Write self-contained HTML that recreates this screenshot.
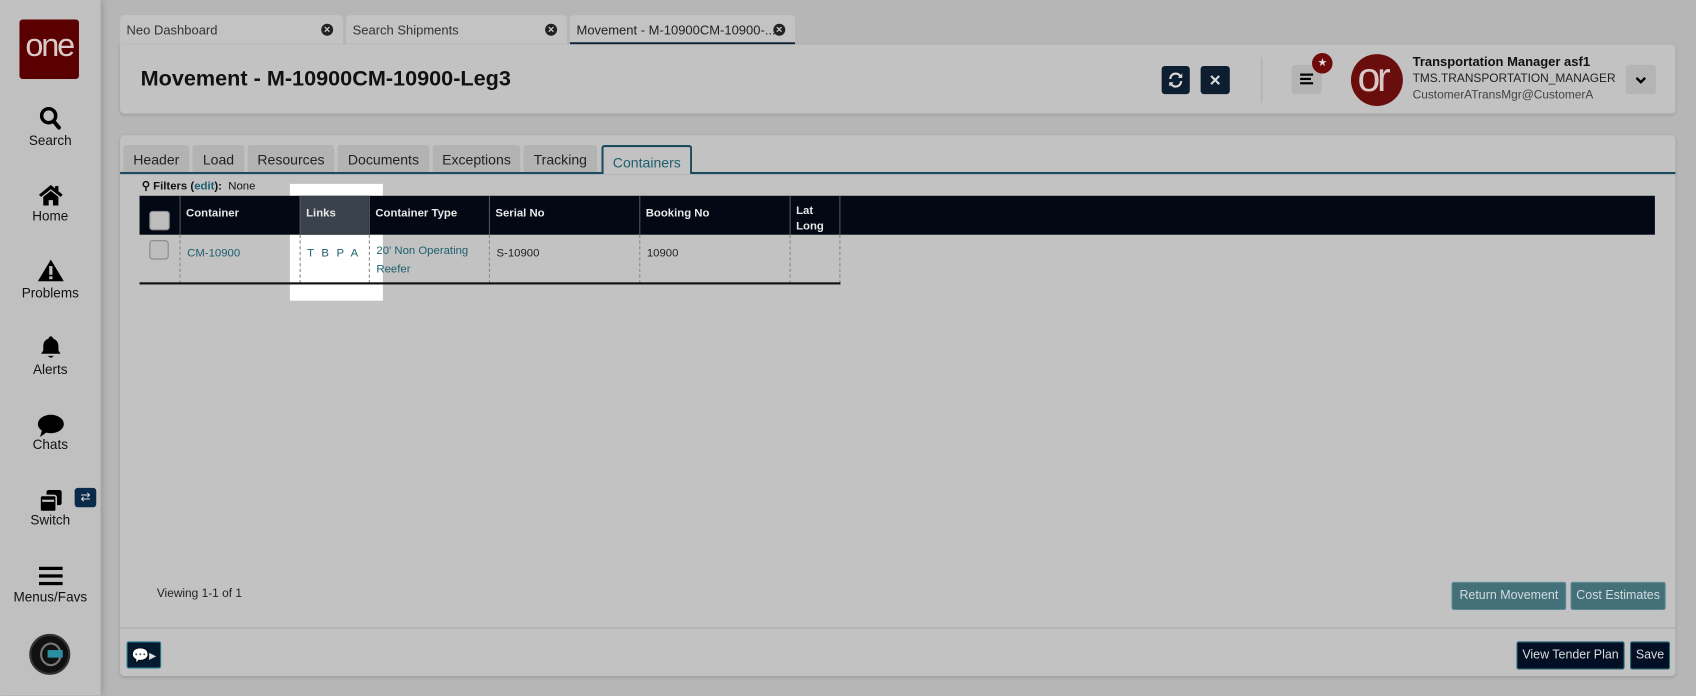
<!DOCTYPE html>
<html><head><meta charset="utf-8"><style>
*{box-sizing:border-box;margin:0;padding:0}
html,body{width:1696px;height:696px;overflow:hidden;background:#b6b6b6;font-family:"Liberation Sans",sans-serif}
#w{position:absolute;left:0;top:0;width:1568px;height:643px;transform:scale(1.08163);transform-origin:0 0}
.a{position:absolute}
.side{left:0;top:0;width:93px;height:643px;background:#c0c0c0;box-shadow:2px 0 6px rgba(0,0,0,.15)}
.nav{position:absolute;left:0;width:93px;text-align:center;font-size:12.5px;color:#111}
.tab{position:absolute;top:14px;height:27px;background:#c3c3c3;border-radius:4px 4px 0 0;font-size:12px;color:#333;padding:7px 6px;white-space:nowrap}
.x{position:absolute;right:9px;top:8px;width:11px;height:11px;border-radius:50%;background:#222;color:#ccc;font-size:8px;line-height:11px;text-align:center;font-weight:bold}
.card{background:#c2c2c2;border-radius:4px;box-shadow:0 1px 3px rgba(0,0,0,.15)}
.itab{position:absolute;top:134px;height:25px;background:#b3b3b3;border-radius:3px 3px 0 0;font-size:13px;color:#222;text-align:center;padding-top:6px}
.th{position:absolute;top:181px;height:36px;color:#e8e8e8;font-size:10.5px;font-weight:bold;padding:10px 6px}
.td{position:absolute;top:217px;height:45px;font-size:10.5px;padding:9px 6px;color:#222;border-left:1px dashed #888;line-height:17px}
.lnk{color:#1c5f6e}
.btn{position:absolute;font-size:11.5px;text-align:center;border-radius:2px;white-space:nowrap}
</style></head><body><div id="w">
<div class="a side">
 <div class="a" style="left:18px;top:18px;width:55px;height:55px;background:#5a0000;border-radius:3px;color:#d9c9c9;font-size:30px;text-align:center;line-height:50px;letter-spacing:-2px">one</div>
 <div class="nav" style="top:98px"><svg width="22" height="24" viewBox="0 0 22 24"><circle cx="9" cy="9" r="6.5" fill="none" stroke="#000" stroke-width="3.2"/><path d="M13.5 14l5 6" stroke="#000" stroke-width="3.6" stroke-linecap="round"/></svg><div style="margin-top:-2px">Search</div></div>
 <div class="nav" style="top:170px"><svg width="24" height="20" viewBox="0 0 24 20"><path d="M12 1L1 10l2 2 9-7 9 7 2-2-4-3.3V2h-3v2.2z M5 12v8h5v-5h4v5h5v-8l-7-5.5z" fill="#000"/></svg><div>Home</div></div>
 <div class="nav" style="top:239px"><svg width="26" height="22" viewBox="0 0 26 22"><path d="M13 1L1 21h24z" fill="#000"/><rect x="11.5" y="7" width="3" height="8" fill="#c0c0c0"/><rect x="11.5" y="16.5" width="3" height="2.6" fill="#c0c0c0"/></svg><div>Problems</div></div>
 <div class="nav" style="top:310px"><svg width="22" height="22" viewBox="0 0 22 22"><path d="M11 1a2 2 0 0 1 2 2c3 1 5 3.5 5 7v4l2 3H2l2-3v-4c0-3.5 2-6 5-7a2 2 0 0 1 2-2z" fill="#000"/><path d="M8 19h6l-3 2z" fill="#000"/></svg><div>Alerts</div></div>
 <div class="nav" style="top:383px"><svg width="26" height="22" viewBox="0 0 26 22"><ellipse cx="13" cy="9" rx="12" ry="8.5" fill="#000"/><path d="M5 14l-2 7 7-5z" fill="#000"/></svg><div style="margin-top:-4px">Chats</div></div>
 <div class="nav" style="top:452px"><svg width="24" height="22" viewBox="0 0 24 22"><rect x="8" y="1" width="14" height="14" rx="2" fill="#000"/><rect x="2" y="6" width="15" height="15" rx="2" fill="#000" stroke="#c0c0c0" stroke-width="1.5"/><rect x="4" y="10" width="11" height="2" fill="#c0c0c0"/></svg><div style="margin-top:-3px">Switch</div></div>
 <div class="a" style="left:69px;top:451px;width:20px;height:18px;background:#0a2a4a;border-radius:3px;color:#ddd;font-size:11px;text-align:center;line-height:18px">⇄</div>
 <div class="nav" style="top:522px"><svg width="22" height="20" viewBox="0 0 22 20"><rect x="0" y="2" width="22" height="3" fill="#000"/><rect x="0" y="9" width="22" height="3" fill="#000"/><rect x="0" y="16" width="22" height="3" fill="#000"/></svg><div>Menus/Favs</div></div>
 <div class="a" style="left:27px;top:586px;width:38px;height:38px;border-radius:50%;background:#111;border:2px solid #333"><div class="a" style="left:8px;top:6px;width:20px;height:22px;border-radius:50%;border:2px solid #777"></div><div class="a" style="left:15px;top:13px;width:14px;height:7px;background:#2a8fa0"></div></div>
</div>

<div class="tab" style="left:111px;width:206px">Neo Dashboard<span class="x">✕</span></div>
<div class="tab" style="left:320px;width:204px">Search Shipments<span class="x">✕</span></div>
<div class="tab" style="left:527px;width:208px;border-bottom:2px solid #0e2436;color:#222">Movement - M-10900CM-10900-...<span class="x">✕</span></div>

<div class="a card" style="left:111px;top:41px;width:1438px;height:64px;border-radius:0 4px 4px 4px">
 <div class="a" style="left:19px;top:21px;font-size:20px;font-weight:bold;color:#111">Movement - M-10900CM-10900-Leg3</div>
 <div class="a" style="left:963px;top:20px;width:26px;height:26px;background:#0c1e30;border-radius:3px"><svg width="26" height="26" viewBox="0 0 26 26"><path d="M8 12a5 5 0 0 1 9-3l1 1M18 14a5 5 0 0 1-9 3l-1-1" fill="none" stroke="#ddd" stroke-width="2"/><path d="M19 7v4h-4zM7 19v-4h4z" fill="#ddd"/></svg></div>
 <div class="a" style="left:999px;top:20px;width:27px;height:26px;background:#0c1e30;border-radius:3px;color:#ddd;font-weight:bold;font-size:14px;text-align:center;line-height:26px">✕</div>
 <div class="a" style="left:1055px;top:12px;width:1px;height:42px;background:#aaa"></div>
 <div class="a" style="left:1083px;top:19px;width:28px;height:27px;background:#b4b4b4;border-radius:3px"><div class="a" style="left:8px;top:8px;width:12px;height:2px;background:#000"></div><div class="a" style="left:8px;top:12px;width:10px;height:2px;background:#000"></div><div class="a" style="left:8px;top:16px;width:12px;height:2px;background:#000"></div></div>
 <div class="a" style="left:1102px;top:8px;width:19px;height:19px;border-radius:50%;background:#6e0a0a;color:#ddd;font-size:10px;text-align:center;line-height:19px">★</div>
 <div class="a" style="left:1138px;top:9px;width:48px;height:48px;border-radius:50%;background:#6a0d0d;overflow:hidden;color:#d8c8c8;font-size:38px;line-height:44px;padding-left:6px;letter-spacing:-3px">or</div>
 <div class="a" style="left:1195px;top:9px;font-size:12px;font-weight:bold;color:#111">Transportation Manager asf1</div>
 <div class="a" style="left:1195px;top:26px;font-size:11px;color:#222">TMS.TRANSPORTATION_MANAGER</div>
 <div class="a" style="left:1195px;top:41px;font-size:11px;color:#444">CustomerATransMgr@CustomerA</div>
 <div class="a" style="left:1392px;top:19px;width:28px;height:27px;background:#b4b4b4;border-radius:3px"><svg width="28" height="27" viewBox="0 0 28 27"><path d="M10 12l4 4 4-4" fill="none" stroke="#000" stroke-width="2.2"/></svg></div>
</div>

<div class="a card" style="left:111px;top:125px;width:1438px;height:500px"></div>
<div class="itab" style="left:114px;width:61px">Header</div>
<div class="itab" style="left:178px;width:48px">Load</div>
<div class="itab" style="left:229px;width:80px">Resources</div>
<div class="itab" style="left:312px;width:85px">Documents</div>
<div class="itab" style="left:400px;width:81px">Exceptions</div>
<div class="itab" style="left:484px;width:68px">Tracking</div>
<div class="a" style="left:111px;top:159px;width:1438px;height:2px;background:#1c4b5e"></div>
<div class="itab" style="left:556px;width:84px;height:27px;background:#c2c2c2;border:2px solid #1c4b5e;border-bottom:none;color:#1c5f6e;padding-top:7px">Containers</div>

<div class="a" style="left:268px;top:170px;width:86px;height:108px;background:#fff"></div>
<div class="a" style="left:131px;top:166px;font-size:10.5px;color:#111"><b>⚲ Filters (<span class="lnk">edit</span>):</b> &nbsp;None</div>
<div class="a" style="left:129px;top:181px;width:1401px;height:36px;background:#020814"></div>
<div class="a" style="left:277px;top:181px;width:64px;height:36px;background:#3a424b"></div>
<div class="a" style="left:138px;top:195px;width:19px;height:18px;background:#bdbdbd;border-radius:3px;border:1px solid #888"></div>
<div class="th" style="left:166px">Container</div>
<div class="th" style="left:277px">Links</div>
<div class="th" style="left:341px">Container Type</div>
<div class="th" style="left:452px">Serial No</div>
<div class="th" style="left:591px">Booking No</div>
<div class="th" style="left:730px;padding-top:7px;line-height:14px">Lat<br>Long</div>
<div class="a" style="left:166px;top:181px;width:1px;height:36px;background:#555"></div>
<div class="a" style="left:277px;top:181px;width:1px;height:36px;background:#555"></div>
<div class="a" style="left:341px;top:181px;width:1px;height:36px;background:#555"></div>
<div class="a" style="left:452px;top:181px;width:1px;height:36px;background:#555"></div>
<div class="a" style="left:591px;top:181px;width:1px;height:36px;background:#555"></div>
<div class="a" style="left:730px;top:181px;width:1px;height:36px;background:#555"></div>
<div class="a" style="left:776px;top:181px;width:1px;height:36px;background:#555"></div>
<div class="a" style="left:138px;top:222px;width:18px;height:18px;background:#bdbdbd;border-radius:3px;border:1px solid #888"></div>
<div class="td lnk" style="left:166px;width:111px">CM-10900</div>
<div class="td lnk" style="left:277px;width:64px;white-space:nowrap;word-spacing:4px">T B P A</div>
<div class="td lnk" style="left:341px;width:111px;padding-top:7px">20' Non Operating Reefer</div>
<div class="td" style="left:452px;width:139px">S-10900</div>
<div class="td" style="left:591px;width:139px">10900</div>
<div class="td" style="left:730px;width:47px;border-right:1px dashed #888"></div>
<div class="a" style="left:129px;top:261px;width:648px;height:2px;background:#111"></div>

<div class="a" style="left:145px;top:543px;font-size:11px;color:#222">Viewing 1-1 of 1</div>
<div class="btn" style="left:1342px;top:538px;width:106px;height:26px;background:#44707a;color:#d3dcde;line-height:24px;border:1px solid #5b8a94">Return Movement</div>
<div class="btn" style="left:1452px;top:538px;width:88px;height:26px;background:#44707a;color:#d3dcde;line-height:24px;border:1px solid #5b8a94">Cost Estimates</div>
<div class="a" style="left:111px;top:580px;width:1438px;height:1px;background:#a8a8a8"></div>
<div class="btn" style="left:117px;top:593px;width:32px;height:25px;background:#041a2e;border:1px solid #2b7a8a;color:#ddd;line-height:23px;font-size:13px">💬▸</div>
<div class="btn" style="left:1402px;top:593px;width:100px;height:26px;background:#020f24;border:1px solid #2b6c7a;color:#ddd;line-height:24px">View Tender Plan</div>
<div class="btn" style="left:1507px;top:593px;width:37px;height:26px;background:#020f24;border:1px solid #2b6c7a;color:#ddd;line-height:24px">Save</div>
</div></body></html>
